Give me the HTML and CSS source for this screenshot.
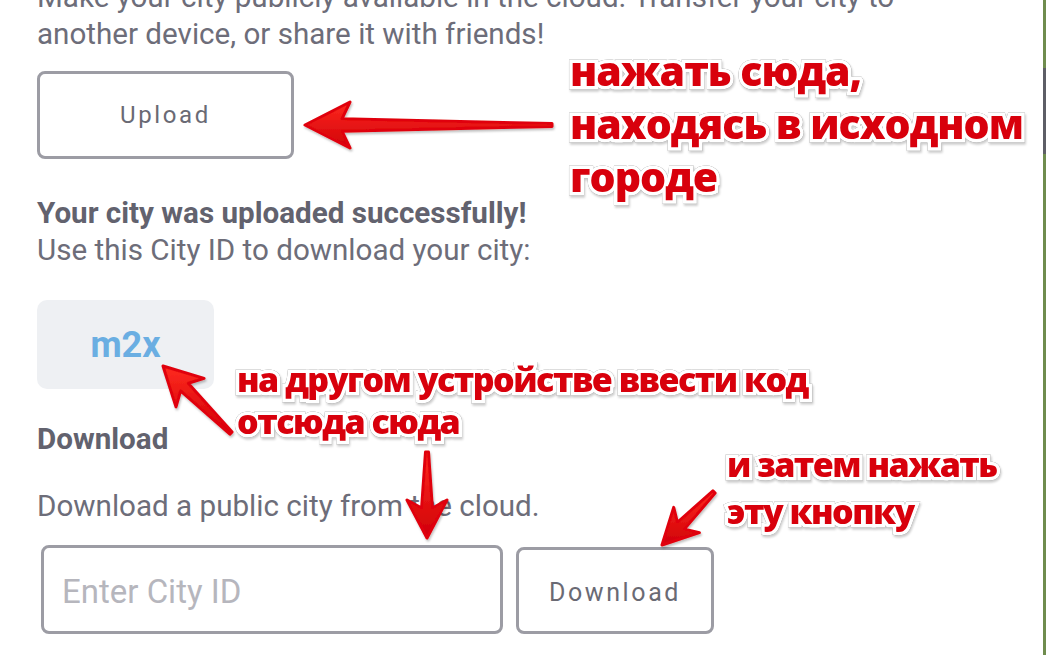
FILE: index.html
```html
<html>

<head>
	<meta charset="utf-8">
	<title>City cloud</title>
	<link rel="stylesheet" href="styles.css">
</head>

<body>
	<div class="screen">
		<main class="panel">
			<p class="text lead">Make your city publicly available in the cloud. Transfer your city to<br>another device, or share it with friends!</p>
			<button class="btn btn-upload" type="button">Upload</button>
			<p class="text status">
				<b>Your city was uploaded successfully!</b><br>
				Use this City ID to download your city:
			</p>
			<div class="city-id">m2x</div>

			<h3 class="title">Download</h3>
			<p class="text">Download a public city from the cloud.</p>
			<form class="download-row" id="download">
				<input class="city-input" name="city" type="text" placeholder="Enter City ID">
				<button class="btn btn-download" type="submit">Download</button>
			</form>

			<!-- red notes drawn on top -->
			<div class="notes">
				<svg class="arrows" id="arrows" width="1043" height="655" viewBox="0 0 1043 655">
					<defs>
						<linearGradient id="red" x1="0" y1="0" x2="0" y2="1">
							<stop offset="0" stop-color="#ff2a1f" />
							<stop offset="1" stop-color="#cf0008" />
						</linearGradient>
						<filter id="shade" x="-20%" y="-20%" width="140%" height="140%">
							<feDropShadow dx="1" dy="2" stdDeviation="1.2" flood-color="#000" flood-opacity="0.25" />
						</filter>
					</defs>
				</svg>
				<div class="note note-upload">нажать сюда,<br>находясь в исходном<br>городе</div>
				<div class="note note-code">на другом устройстве ввести код<br>отсюда сюда</div>
				<div class="note note-button">и затем нажать<br>эту кнопку</div>
			</div>
		</main>
		<aside class="edge"><span class="edge-bar"></span></aside>
	</div>
	<script>
		// tail x, tail y, tip x, tip y, head length, head half width
		const arrowList = [
			[552, 125, 305, 125, 45, 23],
			[231, 433, 163, 366, 38, 20],
			[427, 452, 427, 538, 38, 20],
			[714, 492, 662, 545, 35, 18]
		];

		const svg = document.getElementById('arrows');

		const arrow = function (x1, y1, x2, y2, len, half) {
			const dx = x2 - x1;
			const dy = y2 - y1;
			const dist = Math.hypot(dx, dy);
			const ux = dx / dist, uy = dy / dist;
			const nx = -uy, ny = ux;
			const bx = x2 - ux * len, by = y2 - uy * len;
			const kx = x2 - ux * (len - 8), ky = y2 - uy * (len - 8);
			const neck = half * 0.27;
			const tail = 1.5;
			const pts = [
				[x2, y2],
				[bx + nx * half, by + ny * half],
				[kx + nx * neck, ky + ny * neck],
				[x1 + nx * tail, y1 + ny * tail],
				[x1 - nx * tail, y1 - ny * tail],
				[kx - nx * neck, ky - ny * neck],
				[bx - nx * half, by - ny * half]
			];
			const poly = document.createElementNS('http://www.w3.org/2000/svg', 'polygon');
			poly.setAttribute('points', pts.map(p => p[0].toFixed(1) + ',' + p[1].toFixed(1)).join(' '));
			poly.setAttribute('class', 'arrow');
			svg.appendChild(poly);
		};

		arrowList.forEach(a => arrow(...a));

		document.getElementById('download').addEventListener('submit', function (event) {
			event.preventDefault();
		});
	</script>
</body>

</html>
```

FILE: styles.css
```css
html,
body {
	margin: 0;
	width: 100%;
	height: 100%;
	overflow: hidden;
	background-color: #ffffff;
}

.screen {
	display: flex;
	height: 100%;
}

.panel {
	position: relative;
	flex: 1;
	padding-left: 37px;
	font-family: Roboto, "Liberation Sans", sans-serif;
	color: #6d6d79;
}

.text {
	margin: 0;
	font-size: 29.6px;
	line-height: 37px;
}

.lead {
	margin-top: -21px;
}

.btn {
	display: flex;
	align-items: center;
	justify-content: center;
	background-color: #ffffff;
	border: 3px solid #9c9ca4;
	border-radius: 8px;
	font-family: Roboto, "Liberation Sans", sans-serif;
	font-size: 24px;
	letter-spacing: 2.6px;
	color: #6a6a74;
	padding: 0;
}

.btn-upload {
	margin-top: 18px;
	width: 257px;
	height: 88px;
}

.status {
	margin-top: 36px;
}

.status b {
	color: #62626e;
}

.city-id {
	margin-top: 31px;
	width: 177px;
	height: 89px;
	border-radius: 10px;
	background-color: #eef0f3;
	display: flex;
	align-items: center;
	justify-content: center;
	font-size: 36px;
	font-weight: 700;
	color: #6aaee2;
}

.title {
	margin: 32px 0 30px;
	font-size: 29.6px;
	line-height: 37px;
	font-weight: 700;
	color: #62626e;
}

.download-row {
	display: flex;
	align-items: flex-end;
	gap: 13px;
	margin: 20px 0 0 4px;
}

.city-input {
	box-sizing: border-box;
	width: 462px;
	height: 89px;
	border: 3px solid #9c9ca4;
	border-radius: 8px;
	padding: 4px 18px 0;
	font-family: Roboto, "Liberation Sans", sans-serif;
	font-size: 33px;
	color: #6d6d79;
	outline: none;
}

.city-input::placeholder {
	color: #b6b6bd;
}

.btn-download {
	box-sizing: border-box;
	width: 198px;
	height: 87px;
	font-size: 25px;
	padding-top: 3px;
}

/* annotations */
.notes {
	position: absolute;
	inset: 0;
	pointer-events: none;
}

.arrows {
	position: absolute;
	left: 0;
	top: 0;
}

.arrow {
	fill: url(#red);
	stroke: #e0060b;
	stroke-width: 3;
	stroke-linejoin: round;
	filter: url(#shade);
}

.note {
	position: absolute;
	font-family: "Open Sans", "DejaVu Sans", sans-serif;
	font-weight: 800;
	color: #d8000c;
	white-space: nowrap;
	-webkit-text-stroke: 7px #ffffff;
	paint-order: stroke fill;
	filter: drop-shadow(0 0 0.6px rgba(0, 0, 0, 0.55)) drop-shadow(1px 2px 1px rgba(0, 0, 0, 0.2));
}

.note-upload {
	left: 570px;
	top: 44px;
	font-size: 41px;
	line-height: 53px;
	letter-spacing: -1px;
}

.note-code {
	left: 237px;
	top: 358px;
	font-size: 34px;
	line-height: 42px;
	letter-spacing: -1.5px;
}

.note-button {
	left: 727px;
	top: 441px;
	font-size: 34px;
	line-height: 47px;
	letter-spacing: -1.5px;
}

/* strip of the screen behind */
.edge {
	width: 3px;
	background-color: #6f8c4e;
	display: flex;
	flex-direction: column;
	padding-top: 68px;
}

.edge-bar {
	height: 86px;
	background-color: #5d5e66;
}
```
